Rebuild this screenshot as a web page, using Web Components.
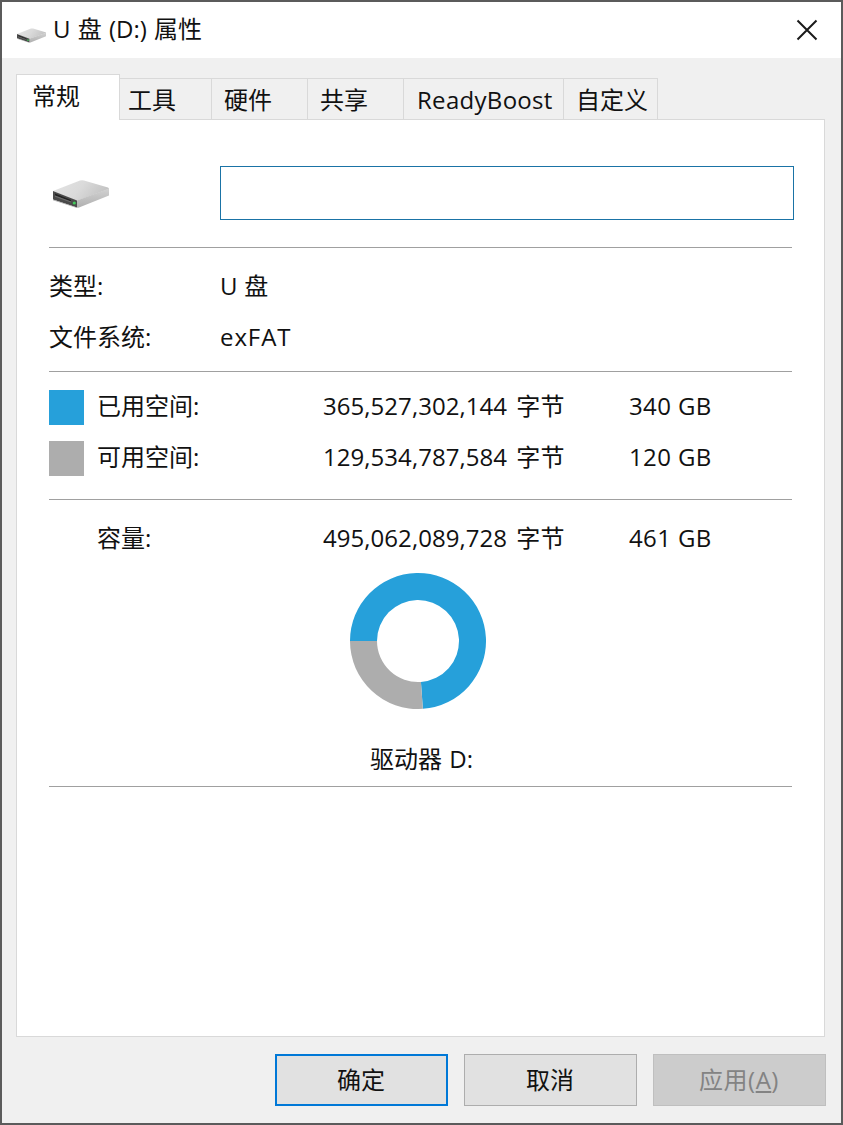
<!DOCTYPE html>
<html lang="zh"><head><meta charset="utf-8"><title>U 盘 (D:) 属性</title>
<style>
html,body{margin:0;padding:0;background:#5b5b5b;}
body{width:843px;height:1125px;overflow:hidden;font:24px/32px "Open Sans","Noto Sans CJK SC",sans-serif;color:#111;}
</style></head><body>
<prop-window>
  <title-bar text="U 盘 (D:) 属性"></title-bar>
  <tab-strip>
    <prop-tab active>常规</prop-tab>
    <prop-tab w="92" style="padding-left:8px">工具</prop-tab>
    <prop-tab w="96">硬件</prop-tab>
    <prop-tab w="96">共享</prop-tab>
    <prop-tab w="160" style="letter-spacing:.3px;padding-left:13px">ReadyBoost</prop-tab>
    <prop-tab w="94" style="padding-left:12px">自定义</prop-tab>
  </tab-strip>
  <tab-panel>
    <name-row></name-row>
    <h-sep style="margin-top:27px"></h-sep>
    <info-row label="类型:" value="U 盘" style="margin-top:12px"></info-row>
    <info-row label="文件系统:" value="exFAT" style="--ls:.9px"></info-row>
    <h-sep style="margin-top:9px"></h-sep>
    <space-row color="#26a0da" label="已用空间:" bytes="365,527,302,144 字节" size="340 GB" style="margin-top:8px"></space-row>
    <space-row color="#adadad" label="可用空间:" bytes="129,534,787,584 字节" size="120 GB"></space-row>
    <h-sep style="margin-top:17px"></h-sep>
    <space-row label="容量:" bytes="495,062,089,728 字节" size="461 GB" style="margin-top:12px"></space-row>
    <usage-donut></usage-donut>
    <drive-caption>驱动器 D:</drive-caption>
    <h-sep style="margin-top:11px"></h-sep>
  </tab-panel>
  <button-bar>
    <dlg-button kind="default">确定</dlg-button>
    <dlg-button>取消</dlg-button>
    <dlg-button kind="disabled">应用(<u>A</u>)</dlg-button>
  </button-bar>
</prop-window>
<script>
let gid=0;
const driveSvg=(w,h)=>{const n=++gid;return `<svg class="drive" width="${w}" height="${h}" viewBox="0 0 56 28" aria-hidden="true">
<defs>
<linearGradient id="t${n}" x1="0" y1="0" x2="1" y2="0.3"><stop offset="0" stop-color="#e4e4e4"/><stop offset="0.55" stop-color="#dadada"/><stop offset="1" stop-color="#c4c4c4"/></linearGradient>
<linearGradient id="s${n}" x1="0" y1="0" x2="0" y2="1"><stop offset="0" stop-color="#d2d2d2"/><stop offset="1" stop-color="#b0b0b0"/></linearGradient>
</defs>
<path d="M0 11 27 .6Q29 0 31 .6L55 7.5 Q56 8 56 9L24.5 20.5 Q23.5 21 22.5 20.6Z" fill="url(#t${n})"/>
<path d="M24 20.5 56 8.5V15.5L26 27.4Q25 27.8 24 27.6Z" fill="url(#s${n})"/>
<path d="M0 11 24 20.5V27.6L0 19.4Z" fill="#4a4a4a"/>
<path d="M2 13.6 18 20 18 21.4 2 15.6Z" fill="#232323"/>
<path d="M2 15.6 18 21.4 18 22.4 2 16.8Z" fill="#6d6d6d"/>
<path d="M0 19.4 24 27.6V28L0 20.2Z" fill="#a8a8a8"/>
<circle cx="21.3" cy="23" r="1.6" fill="#42c95a"/>
</svg>`;};
function def(name,css,html){
  customElements.define(name,class extends HTMLElement{
    connectedCallback(){
      if(this.shadowRoot)return;
      const r=this.attachShadow({mode:"open"});
      r.innerHTML=`<style>${css}</style>`+(typeof html==="function"?html(this):html);
    }
  });
}
const a=(e,n)=>e.getAttribute(n)||"";
def("prop-window",`:host{display:flex;flex-direction:column;box-sizing:border-box;margin:2px 2px 0 2px;width:839px;height:1121px;background:#f0f0f0;}`,`<slot></slot>`);
def("title-bar",`:host{display:flex;align-items:center;height:56px;background:#fff;flex:none;padding:0 23px 0 15px;}
.t{margin-left:7px;flex:1;font-size:24px;line-height:32px;color:#111;word-spacing:1px;padding-bottom:2px}
svg{display:block}.drive{margin-top:10px}`,e=>`${driveSvg(29,15)}<span class="t">${a(e,"text")}</span>
<svg width="22" height="22" viewBox="0 0 22 22" aria-label="关闭"><path d="M1.5 1.5 20.5 20.5M20.5 1.5 1.5 20.5" stroke="#1a1a1a" stroke-width="2" fill="none"/></svg>`);
def("tab-strip",`:host{display:flex;align-items:flex-end;height:45px;margin:16px 0 0 14px;flex:none;position:relative;z-index:1}`,`<slot></slot>`);
def("prop-tab",`:host{display:flex;box-sizing:border-box;align-items:center;height:41px;background:#f0f0f0;border:1px solid #d9d9d9;border-bottom:0;border-left:0;font-size:24px;color:#111;padding:2px 0 0 12px}
:host([active]){width:104px;height:46px;margin-bottom:-1px;background:#fff;border-left:1px solid #d9d9d9;padding:0 0 3px 15px}`,e=>{const w=a(e,"w");if(w)e.style.width=w+"px";return `<slot></slot>`;});
def("tab-panel",`:host{display:block;box-sizing:border-box;margin-left:14px;width:809px;height:918px;flex:none;background:#fff;border:1px solid #d9d9d9;padding:0 32px}`,`<slot></slot>`);
def("name-row",`:host{display:flex;align-items:center;margin-top:46px;height:54px;margin-right:-2px}
.i{width:171px;padding:1px 0 0 4px;box-sizing:border-box;display:flex;}
.b{flex:1;height:54px;box-sizing:border-box;border:1px solid #1a73a6;background:#fff}`,`<div class="i">${driveSvg(56,28)}</div><div class="b"></div>`);
def("h-sep",`:host{display:block;height:1px;background:#a0a0a0}`,``);
def("info-row",`:host{display:grid;grid-template-columns:171px 1fr;height:51px;align-items:center;font-size:24px;color:#111}
.v{letter-spacing:var(--ls,.2px)}`,e=>`<span>${a(e,"label")}</span><span class="v">${a(e,"value")}</span>`);
def("space-row",`:host{display:grid;grid-template-columns:49px 225px 306px 1fr;height:51px;align-items:center;font-size:24px;color:#111}
.s{width:35px;height:35px;display:block;margin-top:4px}span{line-height:32px}.l{margin-left:-1px}.b{word-spacing:3px;letter-spacing:.05px}.z{letter-spacing:.4px}`,e=>`<i class="s" style="${a(e,"color")?"background:"+a(e,"color"):""}"></i><span class="l">${a(e,"label")}</span><span class="b">${a(e,"bytes")}</span><span class="z">${a(e,"size")}</span>`);
def("usage-donut",`:host{display:flex;justify-content:center;margin-top:10px}svg{display:block;margin-left:-5px}`,
`<svg width="136" height="136" viewBox="0 0 136 136" role="img"><path d="M0 68A68 68 0 1 1 72.86 135.83L70.93 108.9A41 41 0 1 0 27 68Z" fill="#26a0da"/><path d="M0 68H27A41 41 0 0 0 70.93 108.9L72.86 135.83A68 68 0 0 1 0 68Z" fill="#adadad"/></svg>`);
def("drive-caption",`:host{display:block;text-align:center;margin-top:34px;height:32px;line-height:32px;font-size:24px;color:#111;padding-left:2px;word-spacing:1px}`,`<slot></slot>`);
def("button-bar",`:host{display:flex;justify-content:flex-end;gap:16px;margin-top:17px;padding-right:15px;flex:none}`,`<slot></slot>`);
def("dlg-button",`:host{display:flex;align-items:center;justify-content:center;box-sizing:border-box;width:173px;height:52px;background:#e1e1e1;border:1px solid #adadad;font-size:24px;color:#111;padding-right:1px}
:host([kind=default]){border:2px solid #0078d7}
:host([kind=disabled]){background:#cccccc;border-color:#bfbfbf;color:#838383;letter-spacing:.5px}`,`<slot></slot>`);
</script>
</body></html>
